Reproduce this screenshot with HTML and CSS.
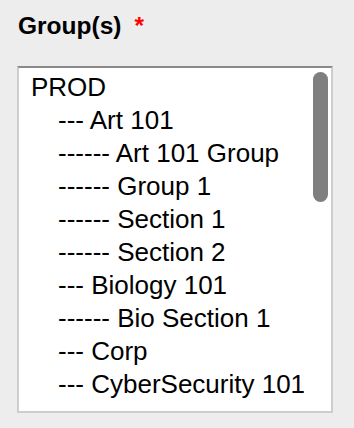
FILE: index.html
```html
<!DOCTYPE html>
<html lang="en">
<head>
    <meta charset="UTF-8">
    <meta name="viewport" content="width=device-width, initial-scale=1.0">
    <title>Group(s)</title>
    <link rel="stylesheet" href="styles.css">
</head>
<body>
    <div class="field">
        <label class="field-label">Group(s)<span class="required">*</span></label>
        <div class="group-list">
            <div class="option">PROD</div>
            <div class="option child">--- Art 101</div>
            <div class="option child">------ Art 101 Group</div>
            <div class="option child">------ Group 1</div>
            <div class="option child">------ Section 1</div>
            <div class="option child">------ Section 2</div>
            <div class="option child">--- Biology 101</div>
            <div class="option child">------ Bio Section 1</div>
            <div class="option child">--- Corp</div>
            <div class="option child">--- CyberSecurity 101</div>
            <div class="scroll-thumb"></div>
        </div>
    </div>
</body>
</html>
```

FILE: styles.css
```css
body {
    margin: 0;
    padding: 0;
    background-color: #ededed;
    font-family: "Liberation Sans", Arial, sans-serif;
    color: #000;
}
.field {
    padding: 11px 21px 0 17px;
}
.field-label {
    display: block;
    font-size: 24.5px;
    font-weight: bold;
    line-height: 30px;
    padding-left: 1px;
}
.required {
    color: #f00;
    margin-left: 13px;
}
.group-list {
    position: relative;
    margin-top: 25px;
    height: 340px;
    overflow: hidden;
    background: #fff;
    border: 2px solid #cdcdcd;
    border-top-color: #8a8a8a;
    padding: 3px 0 0 12px;
    box-sizing: content-box;
    width: 300px;
}
.option {
    font-size: 26px;
    line-height: 33px;
    white-space: nowrap;
}
.option.child {
    padding-left: 27px;
}
.scroll-thumb {
    position: absolute;
    top: 4px;
    right: 3px;
    width: 15px;
    height: 130px;
    border-radius: 8px;
    background: #7f7f7f;
}
```
